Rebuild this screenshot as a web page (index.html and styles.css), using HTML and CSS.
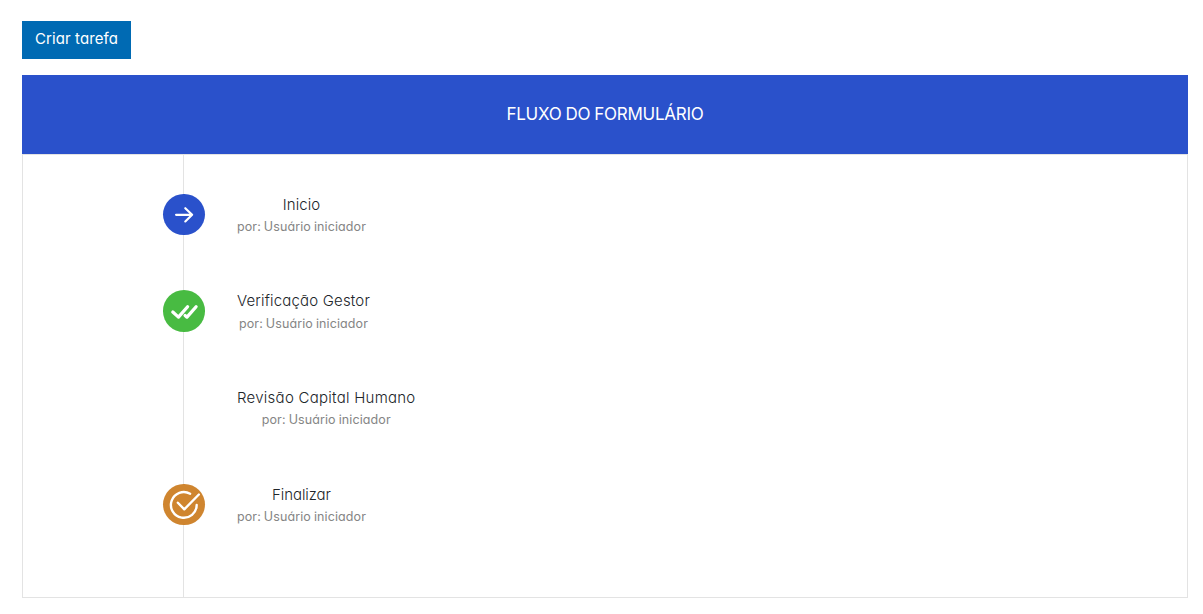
FILE: index.html
```html
<!DOCTYPE html>
<html lang="pt-BR">
<head>
<meta charset="utf-8">
<title>Fluxo do formulário</title>
<link rel="stylesheet" href="styles.css">
</head>
<body>
<button class="create" type="button"><span class="create-label">Criar tarefa</span></button>
<section class="panel">
  <h1 class="panel-title"><span class="title-label">FLUXO DO FORMULÁRIO</span></h1>
  <div class="panel-body">
    <ol class="flow">
      <li class="step">
        <span class="badge start"><svg viewBox="0 0 42 42"><path d="M13 21H29M22.3 14.3L29.2 21L22.3 27.7" stroke-width="2.2"/></svg></span>
        <div class="text"><div class="name n1">Inicio</div><div class="by">por: Usuário iniciador</div></div>
      </li>
      <li class="step">
        <span class="badge check"><svg viewBox="0 0 42 42"><path d="M9.7 22.3L15.4 27.4L24.6 16.9M22.1 25.8L24 27.4L33.2 16.9" stroke-width="3.3"/></svg></span>
        <div class="text"><div class="name n2">Verificação Gestor</div><div class="by">por: Usuário iniciador</div></div>
      </li>
      <li class="step">
        <span class="badge empty"></span>
        <div class="text"><div class="name n3">Revisão Capital Humano</div><div class="by">por: Usuário iniciador</div></div>
      </li>
      <li class="step">
        <span class="badge done"><svg viewBox="0 0 42 42"><path d="M27.2 9.8A13 13 0 1 0 33.8 21.2M14.8 18.9L21.3 25.6L36 10.6" stroke-width="2.4"/></svg></span>
        <div class="text"><div class="name n4">Finalizar</div><div class="by">por: Usuário iniciador</div></div>
      </li>
    </ol>
  </div>
</section>
</body>
</html>
```
FILE: styles.css
```css
* { box-sizing: border-box; }
body {
  margin: 0;
  padding: 21px 15px 16px 22px;
  background: #fff;
  font-family: Inter, "Open Sans", sans-serif;
  font-feature-settings: "cv11", "ss03";
}
.create {
  display: flex;
  align-items: center;
  justify-content: center;
  width: 109px;
  height: 38px;
  margin: 0 0 16px;
  padding: 0 0 3px;
  border: 0;
  background: #006ab3;
  color: #fff;
  font: inherit;
  font-size: 15px;
  letter-spacing: 0.1px;
  white-space: nowrap;
}
.panel-title {
  display: flex;
  align-items: center;
  justify-content: center;
  height: 79px;
  margin: 0;
  padding-bottom: 2px;
  background: #2a51cb;
  color: #fff;
  font-size: 17px;
  font-weight: 400;
}
.title-label {
  letter-spacing: -0.25px;
  word-spacing: -0.5px;
}
.panel-body {
  height: 444px;
  padding-left: 140px;
  border: 1px solid #e3e3e3;
  background: linear-gradient(#e3e3e3, #e3e3e3) 160px 0 / 1px 100% no-repeat;
}
.flow {
  display: flex;
  flex-direction: column;
  gap: 54.67px;
  margin: 0;
  padding: 38.6px 0 0;
  list-style: none;
}
.step {
  display: flex;
  gap: 32px;
  height: 42px;
}
.badge {
  width: 42px;
  height: 41.6px;
  border-radius: 50%;
}
.badge svg {
  display: block;
  width: 42px;
  height: 41.6px;
  fill: none;
  stroke: #fff;
  stroke-linecap: round;
  stroke-linejoin: round;
}
.start { background: #2a51cb; }
.check { background: #48bb42; }
.done { background: #cf852f; }
.text {
  text-align: center;
  white-space: nowrap;
}
.name {
  height: 22.3px;
  line-height: 22px;
  color: #212529;
  font-size: 15px;
  font-weight: 350;
}
.n1 { letter-spacing: 0.1px; }
.n2 { letter-spacing: 0.17px; }
.n3 { letter-spacing: 0.26px; }
.n4 { letter-spacing: -0.08px; }
.by {
  height: 22px;
  line-height: 22px;
  color: #858585;
  font-size: 12.5px;
  letter-spacing: 0.1px;
  word-spacing: -0.6px;
}
```
